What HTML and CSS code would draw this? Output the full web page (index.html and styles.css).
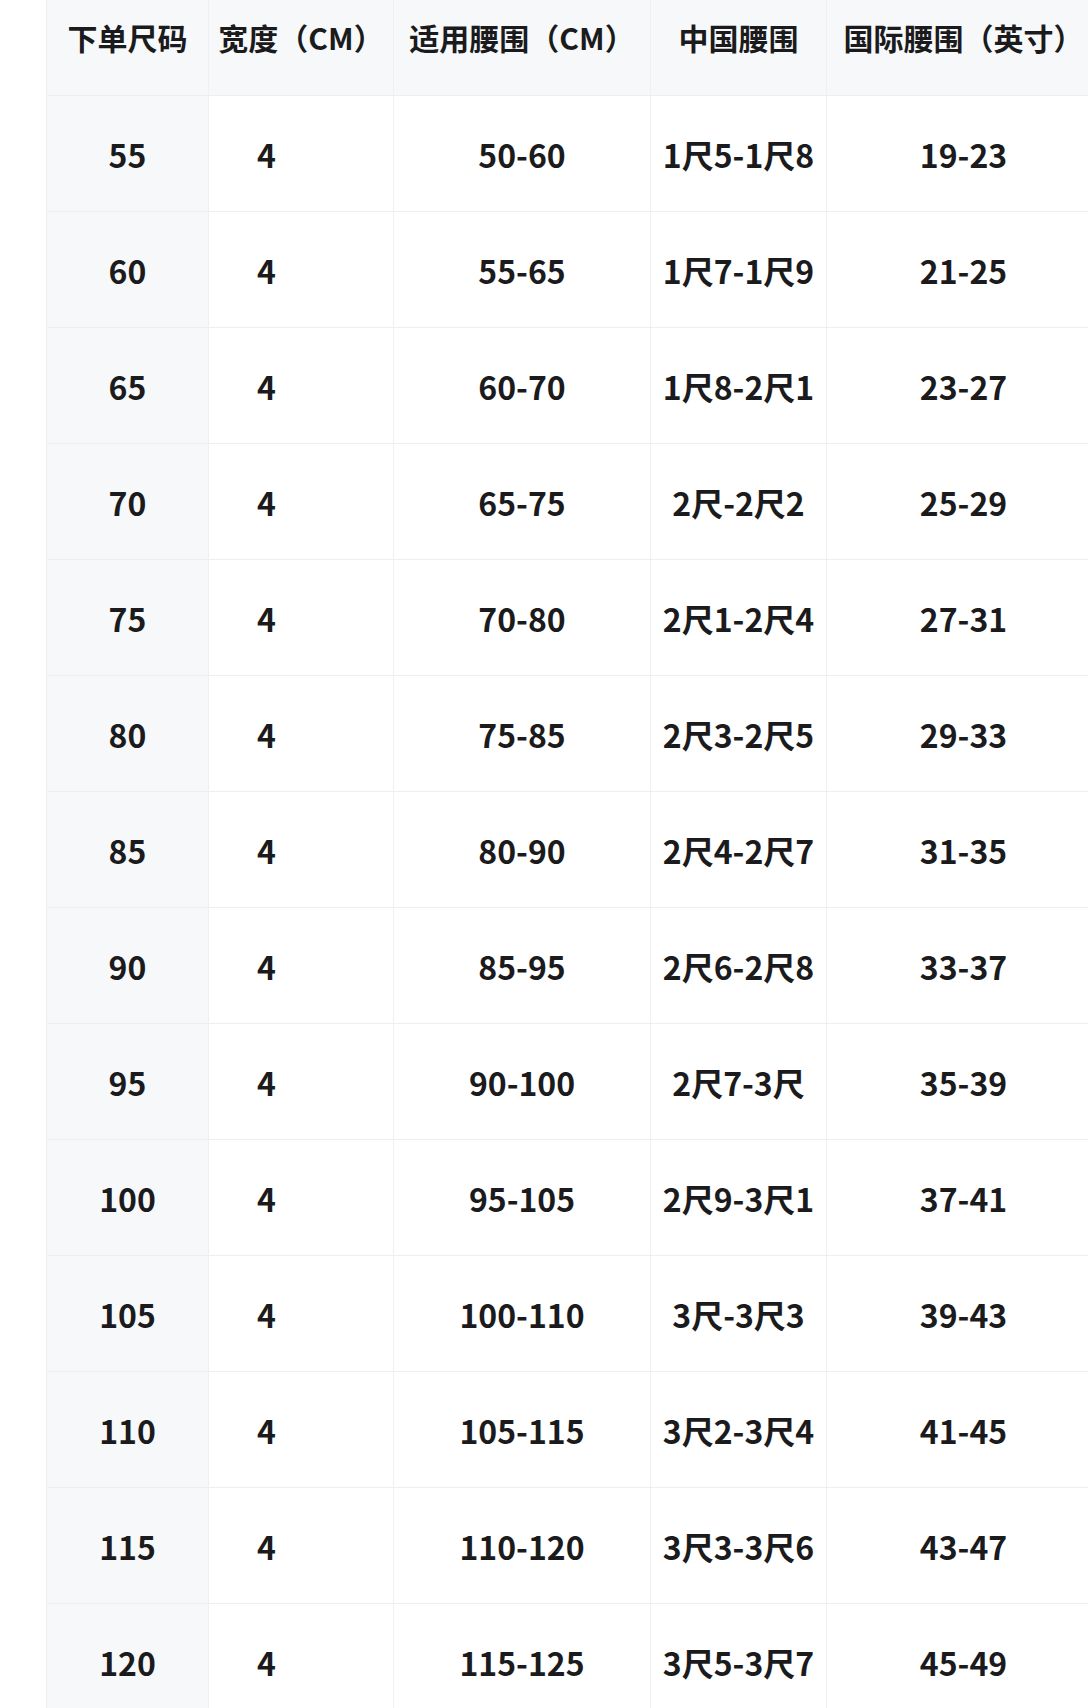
FILE: index.html
```html
<!DOCTYPE html>
<html lang="zh-CN">
<head>
<meta charset="utf-8">
<title>尺码表</title>
<link rel="stylesheet" href="styles.css">
</head>
<body>
<div class="page">
  <div class="size-table">
    <div class="cell head c1">下单尺码</div>
    <div class="cell head c2">宽度（CM）</div>
    <div class="cell head c3">适用腰围（CM）</div>
    <div class="cell head c4">中国腰围</div>
    <div class="cell head c5">国际腰围（英寸）</div>

    <div class="cell c1">55</div><div class="cell c2">4</div><div class="cell c3">50-60</div><div class="cell c4">1尺5-1尺8</div><div class="cell c5">19-23</div>
    <div class="cell c1">60</div><div class="cell c2">4</div><div class="cell c3">55-65</div><div class="cell c4">1尺7-1尺9</div><div class="cell c5">21-25</div>
    <div class="cell c1">65</div><div class="cell c2">4</div><div class="cell c3">60-70</div><div class="cell c4">1尺8-2尺1</div><div class="cell c5">23-27</div>
    <div class="cell c1">70</div><div class="cell c2">4</div><div class="cell c3">65-75</div><div class="cell c4">2尺-2尺2</div><div class="cell c5">25-29</div>
    <div class="cell c1">75</div><div class="cell c2">4</div><div class="cell c3">70-80</div><div class="cell c4">2尺1-2尺4</div><div class="cell c5">27-31</div>
    <div class="cell c1">80</div><div class="cell c2">4</div><div class="cell c3">75-85</div><div class="cell c4">2尺3-2尺5</div><div class="cell c5">29-33</div>
    <div class="cell c1">85</div><div class="cell c2">4</div><div class="cell c3">80-90</div><div class="cell c4">2尺4-2尺7</div><div class="cell c5">31-35</div>
    <div class="cell c1">90</div><div class="cell c2">4</div><div class="cell c3">85-95</div><div class="cell c4">2尺6-2尺8</div><div class="cell c5">33-37</div>
    <div class="cell c1">95</div><div class="cell c2">4</div><div class="cell c3">90-100</div><div class="cell c4">2尺7-3尺</div><div class="cell c5">35-39</div>
    <div class="cell c1">100</div><div class="cell c2">4</div><div class="cell c3">95-105</div><div class="cell c4">2尺9-3尺1</div><div class="cell c5">37-41</div>
    <div class="cell c1">105</div><div class="cell c2">4</div><div class="cell c3">100-110</div><div class="cell c4">3尺-3尺3</div><div class="cell c5">39-43</div>
    <div class="cell c1">110</div><div class="cell c2">4</div><div class="cell c3">105-115</div><div class="cell c4">3尺2-3尺4</div><div class="cell c5">41-45</div>
    <div class="cell c1">115</div><div class="cell c2">4</div><div class="cell c3">110-120</div><div class="cell c4">3尺3-3尺6</div><div class="cell c5">43-47</div>
    <div class="cell c1">120</div><div class="cell c2">4</div><div class="cell c3">115-125</div><div class="cell c4">3尺5-3尺7</div><div class="cell c5">45-49</div>
  </div>
</div>
</body>
</html>
```

FILE: styles.css
```css
html, body {
  margin: 0;
  padding: 0;
  background: #ffffff;
}

.page {
  width: 1088px;
  height: 1708px;
  overflow: hidden;
  padding-left: 46px;
  box-sizing: border-box;
}

.size-table {
  display: grid;
  grid-template-columns: 162px 185px 257px 176px 274px;
  grid-template-rows: 96px;
  grid-auto-rows: 116px;
  width: 1054px;
  border-left: 1px solid #eceef1;
  font-family: "Noto Sans CJK SC", "Noto Sans", sans-serif;
  font-weight: 700;
  font-size: 32px;
  color: #1b1b1d;
}

.cell {
  display: flex;
  align-items: center;
  justify-content: center;
  box-sizing: border-box;
  border-right: 1px solid #eef0f3;
  border-bottom: 1px solid #eceef1;
  white-space: nowrap;
  line-height: 1;
}

.cell.head {
  background: #f7f8fa;
  font-size: 30px;
  padding-bottom: 22px;
}

.cell.c1 {
  background: #f7f8fa;
}

.cell.c2 {
  justify-content: flex-start;
  padding-left: 48px;
}

.cell.head.c2 {
  justify-content: center;
  padding-left: 0;
}
```
